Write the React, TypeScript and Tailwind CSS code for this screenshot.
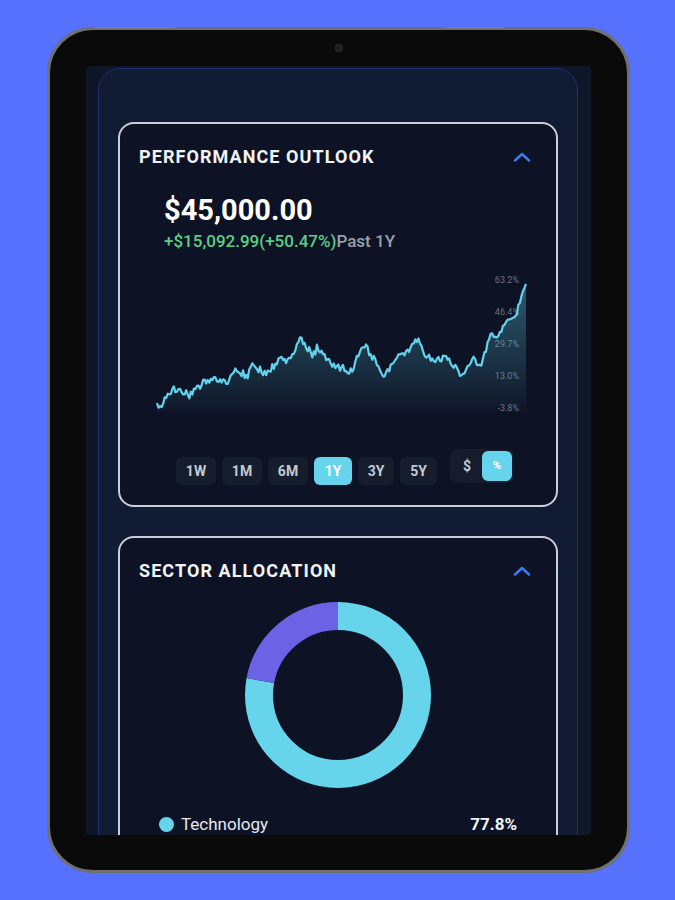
import React from 'react';

// seeded rng so the chart is stable between renders
function mulberry32(seed: number) {
    return () => {
        seed |= 0;
        seed = (seed + 0x6d2b79f5) | 0;
        let t = Math.imul(seed ^ (seed >>> 15), 1 | seed);
        t = (t + Math.imul(t ^ (t >>> 7), 61 | t)) ^ t;
        return ((t ^ (t >>> 14)) >>> 0) / 4294967296;
    };
}

// rough shape of the 1Y curve, in page coordinates
const KEYS: [number, number][] = [
    [157, 403], [159, 408], [173, 388], [190, 396], [207, 380], [227, 382],
    [237, 370], [247, 376], [253, 366], [267, 374], [280, 357], [287, 362],
    [300, 339], [307, 347], [313, 356], [317, 347], [327, 360], [337, 367],
    [347, 370], [353, 371], [360, 350], [367, 348], [373, 357], [383, 377],
    [397, 357], [407, 353], [418, 340], [427, 357], [440, 360], [447, 355],
    [460, 376], [473, 357], [480, 366], [490, 338], [500, 332], [517, 312],
    [522, 294], [526, 284],
];

function buildLine() {
    const rand = mulberry32(42);
    const pts: [number, number][] = [];
    const n = 240;
    for (let i = 0; i <= n; i++) {
        const x = 157 + (i * (526 - 157)) / n;
        let k = 0;
        while (k < KEYS.length - 2 && KEYS[k + 1][0] < x) k++;
        const [x0, y0] = KEYS[k];
        const [x1, y1] = KEYS[k + 1];
        const t = Math.min(1, Math.max(0, (x - x0) / (x1 - x0)));
        const jitter = i === 0 || i === n ? 0 : (rand() - 0.5) * 8;
        pts.push([x, y0 + (y1 - y0) * t + jitter]);
    }
    return pts;
}

const LINE = buildLine();
const LINE_D = LINE.map(([x, y], i) => `${i ? 'L' : 'M'}${x.toFixed(1)} ${y.toFixed(1)}`).join(' ');
const AREA_D = `${LINE_D} L526 412 L157 412 Z`;

const AXIS = [
    { label: '63.2%', y: 283 },
    { label: '46.4%', y: 315 },
    { label: '29.7%', y: 347 },
    { label: '13.0%', y: 379 },
    { label: '-3.8%', y: 411 },
];

const PERIODS = [
    { label: '1W', w: 'w-[40px]' },
    { label: '1M', w: 'w-[40px]' },
    { label: '6M', w: 'w-[40px]' },
    { label: '1Y', w: 'w-[38px]' },
    { label: '3Y', w: 'w-[36px]' },
    { label: '5Y', w: 'w-[37px]' },
];

const Chevron = () => (
    <svg width="18" height="10" viewBox="0 0 18 10" fill="none">
        <path d="M2 8.5 L9 2 L16 8.5" stroke="#3b7cf5" strokeWidth="2.4" strokeLinecap="round" strokeLinejoin="round" />
    </svg>
);

const CardHeader = ({ title }: { title: string }) => (
    <div className="flex items-center justify-between pt-[22px] pl-[19px] pr-[25px]">
        <span className="text-[18px] leading-[22px] font-bold tracking-[0.06em] text-[#f1f3f7]">{title}</span>
        <Chevron />
    </div>
);

const PerformanceCard = () => (
    <div className="h-[385px] rounded-[16px] border-2 border-[#c9ced8] bg-[#0d1324]">
        <CardHeader title="PERFORMANCE OUTLOOK" />

        <div className="pl-[44px] mt-[25px]">
            <div className="text-[29px] leading-[34px] font-bold text-white">$45,000.00</div>
            <div className="mt-[4px] text-[17px] leading-[20px] font-medium">
                <span className="text-[#5ccf86]">+$15,092.99(+50.47%)</span>
                <span className="text-[#9aa1ad]">Past 1Y</span>
            </div>
        </div>

        {/* 1Y line chart, viewBox uses page coords */}
        <svg className="block mt-[25px]" width="439" height="140" viewBox="120 276 439 140">
            <defs>
                <linearGradient id="perfFill" x1="0" y1="0" x2="0" y2="1">
                    <stop offset="0%" stopColor="#5fd0e8" stopOpacity="0.38" />
                    <stop offset="100%" stopColor="#5fd0e8" stopOpacity="0.02" />
                </linearGradient>
            </defs>
            {AXIS.map((a) => (
                <text key={a.label} x="519" y={a.y} textAnchor="end" fontSize="9" fill="#6b7282" fontFamily="Roboto, sans-serif">
                    {a.label}
                </text>
            ))}
            <path d={AREA_D} fill="url(#perfFill)" />
            <path d={LINE_D} fill="none" stroke="#62d3ec" strokeWidth="2.2" strokeLinejoin="round" />
        </svg>

        <div className="flex items-start pl-[56px] mt-[33px]">
            <div className="flex gap-[6px] mt-[8px]">
                {PERIODS.map((p) => (
                    <button
                        key={p.label}
                        className={`${p.w} h-[28px] rounded-[6px] text-[14px] font-bold ${
                            p.label === '1Y' ? 'bg-[#66d4ec] text-white' : 'bg-[#161d2d] text-[#c4c9d2]'
                        }`}
                    >
                        {p.label}
                    </button>
                ))}
            </div>
            <div className="ml-[13px] flex items-center h-[34px] rounded-[7px] bg-[#151c2c] p-[2px]">
                <span className="w-[30px] text-center text-[14px] font-bold text-[#c4c9d2]">$</span>
                <span className="w-[30px] h-[30px] flex items-center justify-center rounded-[6px] bg-[#66d4ec] text-[11px] font-bold text-white">
                    %
                </span>
            </div>
        </div>
    </div>
);

const R = 79;
const C = 2 * Math.PI * R;
const TECH = 0.778;

const SectorCard = () => (
    <div className="mt-[29px] h-[420px] rounded-[16px] border-2 border-[#c9ced8] bg-[#0d1324]">
        <CardHeader title="SECTOR ALLOCATION" />

        <div className="flex justify-center mt-[20px]">
            <svg width="186" height="186" viewBox="0 0 186 186">
                <g transform="rotate(-90 93 93)">
                    <circle cx="93" cy="93" r={R} fill="none" stroke="#66d4ea" strokeWidth="28" strokeDasharray={`${C * TECH} ${C}`} />
                    <circle
                        cx="93"
                        cy="93"
                        r={R}
                        fill="none"
                        stroke="#6b62e6"
                        strokeWidth="28"
                        strokeDasharray={`${C * (1 - TECH)} ${C}`}
                        strokeDashoffset={-C * TECH}
                    />
                </g>
            </svg>
        </div>

        <div className="mt-[25px] flex items-center justify-between pl-[39px] pr-[39px] text-[17px] leading-[22px]">
            <div className="flex items-center gap-[7px]">
                <span className="w-[15px] h-[15px] rounded-full bg-[#66d4ea]" />
                <span className="text-[#e6e9ef]">Technology</span>
            </div>
            <span className="font-bold text-[#f1f3f7]">77.8%</span>
        </div>
    </div>
);

export default function App() {
    return (
        <div className="w-[675px] h-[900px] bg-[#5571fd] pt-[27px] pl-[47px] font-['Roboto',sans-serif] overflow-hidden">
            {/* tablet body */}
            <div className="relative w-[583px] h-[846px] rounded-[46px] border-[3px] border-[#707070] bg-[#0a0a0a] p-[36px]">
                {/* top buttons */}
                <div className="absolute -top-[3px] left-[45px] w-[80px] h-[1px] bg-[#7d8190]" />
                <div className="absolute -top-[3px] left-[396px] w-[58px] h-[1px] bg-[#7d8190]" />
                {/* camera */}
                <div className="absolute top-[15px] left-[286px] w-[6px] h-[6px] rounded-full bg-[#1e1e22] ring-1 ring-[#2a2a2e]" />

                <div className="w-[505px] h-[769px] rounded-[4px] bg-[#0e1628] overflow-hidden px-[12px] pt-[2px]">
                    <div className="w-[480px] h-[800px] rounded-t-[22px] border border-[#1f3270] bg-[#121b34] px-[19px] pt-[53px]">
                        <PerformanceCard />
                        <SectorCard />
                    </div>
                </div>
            </div>
        </div>
    );
}
